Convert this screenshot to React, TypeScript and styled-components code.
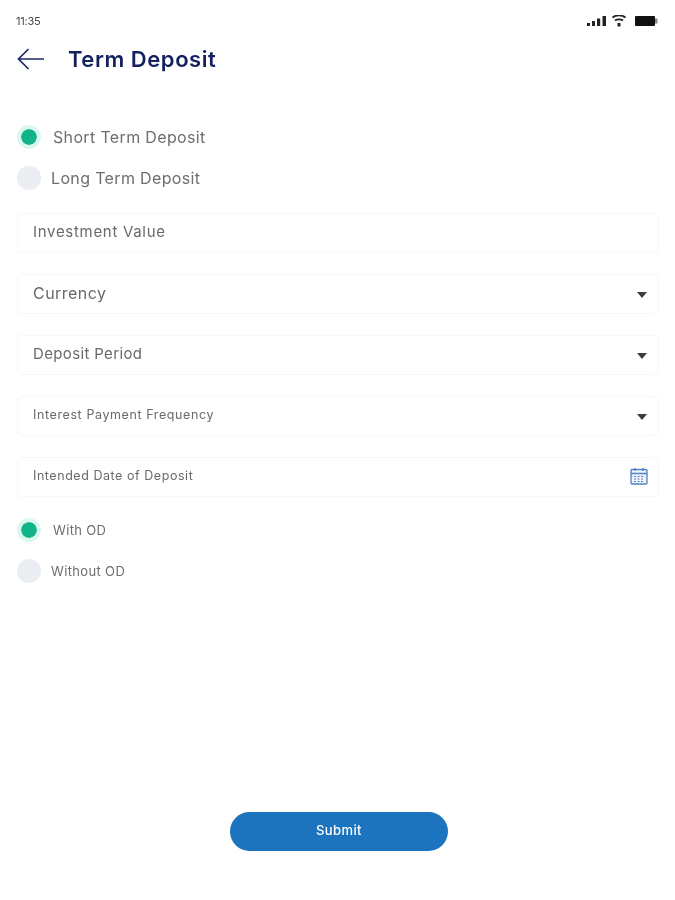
import React from "react";
import styled, { createGlobalStyle } from "styled-components";

const Global = createGlobalStyle`
  html, body { margin: 0; padding: 0; background: #fff; }
  body { font-family: Inter, "Noto Sans", "Liberation Sans", sans-serif; }
`;

const Page = styled.div`
  width: 675px;
  height: 900px;
  box-sizing: border-box;
  background: #fff;
  display: flex;
  flex-direction: column;
  padding: 0 16px 0 17px;
  filter: blur(0.6px);
  overflow: hidden;
`;

const StatusBar = styled.div`
  height: 20px;
  margin-top: 11px;
  display: flex;
  align-items: center;
  justify-content: space-between;
`;

const Time = styled.span`
  font-size: 11px;
  color: #444;
  margin-left: -1px;
  letter-spacing: -0.2px;
`;

const StatusIcons = styled.div`
  display: flex;
  align-items: center;
  gap: 5px;
  margin-right: 1px;
`;

const Header = styled.header`
  height: 36px;
  margin-top: 10px;
  display: flex;
  align-items: center;
  gap: 23px;
`;

const Title = styled.h1`
  margin: 0;
  font-size: 22px;
  font-weight: 600;
  color: #14215f;
  letter-spacing: 0.55px;
`;

const RadioGroup = styled.div<{ $top: number; $fs: number }>`
  display: flex;
  flex-direction: column;
  gap: 17px;
  margin-top: ${(p) => p.$top}px;
  font-size: ${(p) => p.$fs}px;
`;

const RadioRow = styled.div<{ $gap: number }>`
  display: flex;
  align-items: center;
  gap: ${(p) => p.$gap}px;
  height: 24px;
`;

const Radio = styled.span<{ $on?: boolean }>`
  width: 24px;
  height: 24px;
  border-radius: 50%;
  box-sizing: border-box;
  background: ${(p) => (p.$on ? "#12b388" : "#eaedf1")};
  border: ${(p) => (p.$on ? "4px solid #dbf8ef" : "none")};
  background-clip: ${(p) => (p.$on ? "padding-box" : "border-box")};
`;

const RadioLabel = styled.span`
  color: #6e6e6e;
  letter-spacing: 0.35px;
`;

const Fields = styled.div`
  display: flex;
  flex-direction: column;
  gap: 21px;
  margin-top: 23px;
`;

const Field = styled.div`
  height: 40px;
  box-sizing: border-box;
  border: 1px solid #f7f7f8;
  border-radius: 4px;
  padding: 0 11px 0 15px;
  display: flex;
  align-items: center;
  justify-content: space-between;
`;

const FieldLabel = styled.span<{ $fs: number; $ls: number }>`
  font-size: ${(p) => p.$fs}px;
  letter-spacing: ${(p) => p.$ls}px;
  color: #6a6a6a;
  padding-bottom: 3px;
`;

const Caret = styled.span`
  width: 0;
  height: 0;
  margin-top: 2px;
  border-left: 5.5px solid transparent;
  border-right: 5.5px solid transparent;
  border-top: 6px solid #3c3c3c;
`;

const CalendarSlot = styled.span`
  display: flex;
  margin: -2px -1px 0 0;
`;

const Spacer = styled.div`
  flex: 1;
`;

const Footer = styled.div`
  display: flex;
  justify-content: center;
  padding: 0 0 49px 2px;
`;

const Submit = styled.button`
  width: 218px;
  height: 39px;
  padding: 0 0 3px;
  border: none;
  border-radius: 20px;
  background: #1b74bd;
  color: #fff;
  font: 500 13px Inter, "Noto Sans", sans-serif;
  letter-spacing: 0.4px;
`;

const CalendarIcon = () => (
  <svg width="18" height="18" viewBox="0 0 18 18" fill="none" stroke="#4f83c4" strokeWidth="1.3">
    <rect x="1" y="2.5" width="16" height="14.5" rx="1" fill="#eef3fa" />
    <path d="M1 6.5h16M5 1v3M13 1v3" />
    <path d="M4 9.5h10M4 12h10M4 14.5h10" strokeDasharray="2 1.5" strokeWidth="1.2" />
  </svg>
);

const App = () => (
  <>
    <Global />
    <Page>
      <StatusBar>
        <Time>11:35</Time>
        <StatusIcons>
          <svg width="20" height="10" viewBox="0 0 20 10" fill="#222">
            <rect x="0" y="7" width="3" height="3" />
            <rect x="5" y="5" width="3" height="5" />
            <rect x="10" y="2.5" width="3.2" height="7.5" />
            <rect x="15.5" y="0" width="3.5" height="10" />
          </svg>
          <svg width="18" height="12" viewBox="0 0 18 12" fill="none" stroke="#222">
            <path d="M0.5 2.5C4-.3 10-.3 13.5 2.5" strokeWidth="1.8" />
            <path d="M3 5.5C5 4 9 4 11 5.5" strokeWidth="1.8" />
            <rect x="5.5" y="8" width="3" height="3.5" fill="#222" stroke="none" />
          </svg>
          <svg width="23" height="10" viewBox="0 0 23 10" fill="#111">
            <rect x="0" y="0" width="20" height="10" rx="1" />
            <rect x="20" y="2.5" width="2.5" height="5" fill="#888" />
          </svg>
        </StatusIcons>
      </StatusBar>
      <Header>
        <svg width="28" height="24" viewBox="0 0 28 24" fill="none" stroke="#1c2a66" strokeWidth="1.7">
          <path d="M27 12H1.5M11.5 2 1.5 12l10 10" />
        </svg>
        <Title>Term Deposit</Title>
      </Header>
      <RadioGroup $top={48} $fs={16}>
        <RadioRow $gap={12}>
          <Radio $on />
          <RadioLabel>Short Term Deposit</RadioLabel>
        </RadioRow>
        <RadioRow $gap={10}>
          <Radio />
          <RadioLabel>Long Term Deposit</RadioLabel>
        </RadioRow>
      </RadioGroup>
      <Fields>
        <Field>
          <FieldLabel $fs={15} $ls={0.7}>Investment Value</FieldLabel>
        </Field>
        <Field>
          <FieldLabel $fs={16} $ls={0.45}>Currency</FieldLabel>
          <Caret />
        </Field>
        <Field>
          <FieldLabel $fs={15} $ls={0.35}>Deposit Period</FieldLabel>
          <Caret />
        </Field>
        <Field>
          <FieldLabel $fs={12.5} $ls={0.6}>Interest Payment Frequency</FieldLabel>
          <Caret />
        </Field>
        <Field>
          <FieldLabel $fs={12.5} $ls={0.55}>Intended Date of Deposit</FieldLabel>
          <CalendarSlot>
            <CalendarIcon />
          </CalendarSlot>
        </Field>
      </Fields>
      <RadioGroup $top={21} $fs={13}>
        <RadioRow $gap={12}>
          <Radio $on />
          <RadioLabel>With OD</RadioLabel>
        </RadioRow>
        <RadioRow $gap={10}>
          <Radio />
          <RadioLabel>Without OD</RadioLabel>
        </RadioRow>
      </RadioGroup>
      <Spacer />
      <Footer>
        <Submit>Submit</Submit>
      </Footer>
    </Page>
  </>
);

export default App;
